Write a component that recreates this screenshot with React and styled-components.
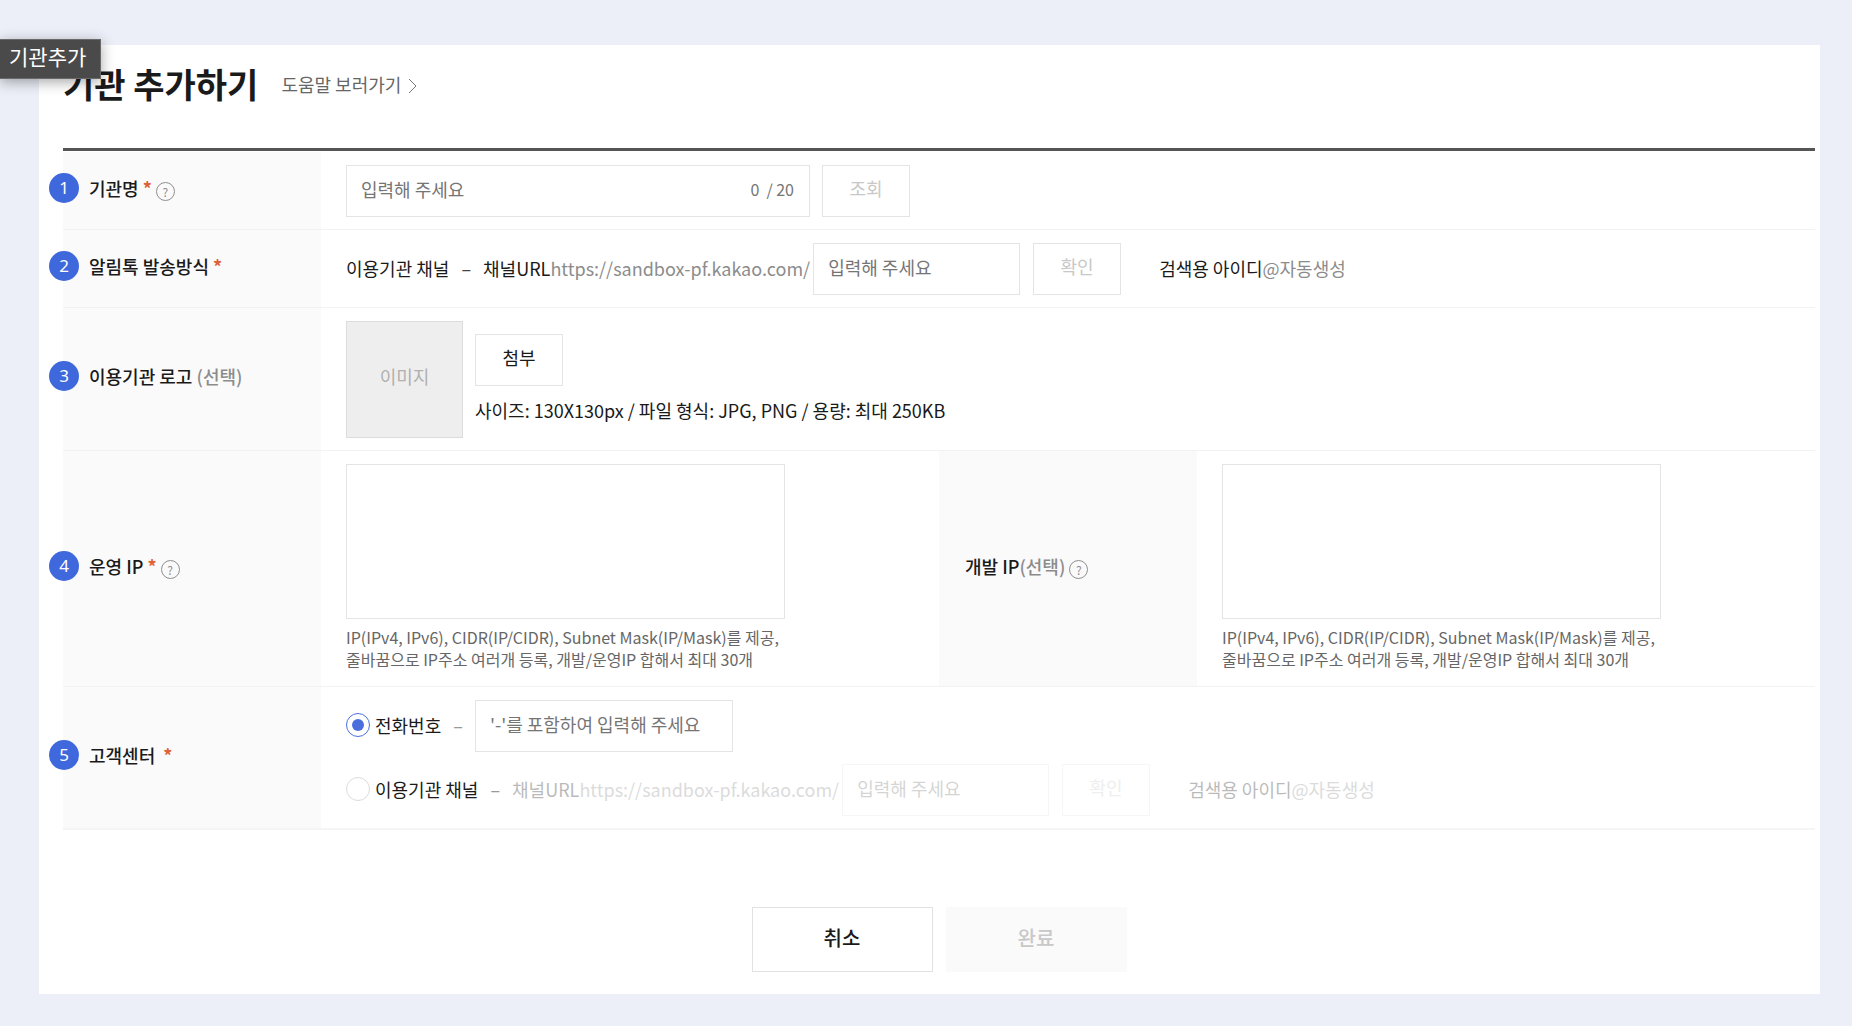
import React, { useState } from 'react';
import styled, { createGlobalStyle, css } from 'styled-components';

const GlobalStyle = createGlobalStyle`
    *,
    *::before,
    *::after {
        box-sizing: border-box;
    }

    body {
        margin: 0;
        background: #eceff8;
    }

    body,
    button,
    input,
    textarea {
        font-family: 'Noto Sans CJK KR', 'Noto Sans', sans-serif;
        font-size: 18px;
        line-height: 26px;
        color: #1a1a1a;
    }
`;

const Page = styled.div`
    position: relative;
    padding: 45px 32px 33px 39px;
`;

const PageTooltip = styled.div`
    position: absolute;
    top: 39px;
    left: 0;
    z-index: 1;
    padding: 3px 14px 9px 9px;
    border: 1px solid #6a6a6a;
    border-left: 0;
    background: #4a4a4a;
    box-shadow: 0 3px 14px rgba(0, 0, 0, 0.35);
    color: #fff;
    font-size: 21px;
`;

const Card = styled.main`
    padding: 16px 5px 22px 24px;
    background: #fff;
`;

const Header = styled.header`
    display: flex;
    align-items: center;
    gap: 23px;
    height: 87px;
    padding-bottom: 42px;
`;

const Title = styled.h1`
    margin: 0;
    font-size: 34px;
    font-weight: 700;
    line-height: 46px;
`;

const HelpLink = styled.a`
    display: flex;
    align-items: center;
    gap: 7px;
    color: #666;
    text-decoration: none;

    svg {
        margin-top: 4px;
    }
`;

const Fields = styled.div`
    padding-top: 1px;
    border-top: 3px solid #555;
`;

const Row = styled.div`
    display: flex;
    border-bottom: 1px solid #f2f2f2;

    &:last-child {
        border-bottom: 2px solid #f5f5f5;
    }
`;

const Field = styled.div`
    display: flex;
    flex: 1;
    min-width: 0;
`;

const FieldLabel = styled.div`
    display: flex;
    flex: none;
    align-items: center;
    width: 258px;
    padding: 0 10px 6px 26px;
    background: #fafafa;
    font-weight: 500;
    white-space: pre;
`;

const FieldBody = styled.div`
    display: flex;
    flex: 1;
    flex-direction: ${({ $column }) => ($column ? 'column' : 'row')};
    align-items: ${({ $column }) => ($column ? 'flex-start' : 'center')};
    gap: 12px;
    min-width: 0;
    padding: 13px 0 12px 25px;
`;

const Badge = styled.span`
    flex: none;
    width: 30px;
    height: 30px;
    margin: 0 10px 0 -40px;
    border-radius: 50%;
    background: #3f68dc;
    color: #fff;
    font-family: 'Noto Sans', sans-serif;
    font-size: 17px;
    font-weight: 400;
    line-height: 30px;
    text-align: center;
`;

const Required = styled.span`
    color: #dd6238;
    font-weight: 700;
`;

const Muted = styled.span`
    color: #8c8c8c;
`;

const HelpButton = styled.button`
    width: 19px;
    height: 19px;
    margin: 7px 0 0 4px;
    padding: 0;
    border: 1px solid #8f8f8f;
    border-radius: 50%;
    background: none;
    color: #8f8f8f;
    font-size: 12px;
    line-height: 15px;
`;

const boxStyle = css`
    height: 52px;
    border: 1px solid #e4e4e4;
    background: #fff;
`;

const TextInput = styled.input`
    ${boxStyle}
    width: ${({ $width }) => $width};
    padding: 0 14px 4px;

    &::placeholder {
        color: #757575;
        opacity: 1;
    }
`;

const CountedInput = styled.div`
    ${boxStyle}
    display: flex;
    align-items: center;
    width: 464px;
    padding-right: 15px;

    input {
        flex: 1;
        min-width: 0;
        height: 50px;
        border: 0;
        background: none;
    }
`;

const Counter = styled.span`
    display: flex;
    gap: 7px;
    padding-bottom: 4px;
    color: #757575;
    font-size: 16px;
`;

const SmallButton = styled.button`
    ${boxStyle}
    flex: none;
    width: 88px;
    padding: 0 0 6px;

    &:disabled {
        color: #c8c8c8;
    }
`;

const Inline = styled.div`
    display: flex;
    align-items: center;
    min-height: 52px;
    white-space: nowrap;
`;

const InlineText = styled.span`
    padding-bottom: 3px;
`;

const Dash = styled(InlineText)`
    padding-right: 12px;
    padding-left: 12px;
    color: ${({ $light }) => ($light ? '#999' : '#444')};
`;

const ChannelGroup = styled.div`
    display: flex;
    align-items: center;
    opacity: ${({ $off }) => ($off ? 0.3 : 1)};

    ${SmallButton} {
        margin: 0 38px 0 13px;
    }
`;

const UrlLabel = styled.label`
    padding: 0 3px 3px 0;
`;

const LogoPreview = styled.div`
    display: flex;
    align-items: center;
    justify-content: center;
    width: 117px;
    height: 117px;
    padding-bottom: 7px;
    border: 1px solid #dcdcdc;
    background: #eee;
    color: #b0b0b0;
`;

const LogoInfo = styled.div`
    display: flex;
    flex-direction: column;
    align-items: flex-start;
    gap: 11px;
    padding-bottom: 3px;
`;

const IpBox = styled.div`
    display: flex;
    flex-direction: column;
    gap: 7px;
    padding-bottom: 4px;
`;

const IpArea = styled.textarea`
    ${boxStyle}
    display: block;
    width: 439px;
    height: 155px;
    padding: 12px 13px;
    resize: none;
`;

const IpHint = styled.p`
    margin: 0;
    color: #666;
    font-size: 16px;
    line-height: 22px;
    white-space: nowrap;
`;

const RadioLabel = styled.label`
    display: flex;
    align-items: center;
    gap: 5px;
    padding-bottom: 3px;
`;

const Radio = styled.input`
    display: grid;
    place-items: center;
    width: 24px;
    height: 24px;
    margin: 0;
    appearance: none;
    border: 1px solid #dcdcdc;
    border-radius: 50%;
    background: #fff;

    &:checked {
        border-color: #4a6fdc;
    }

    &:checked::before {
        content: '';
        width: 12px;
        height: 12px;
        border-radius: 50%;
        background: #4a6fdc;
    }
`;

const Footer = styled.footer`
    display: flex;
    justify-content: center;
    gap: 13px;
    margin-top: 77px;
`;

const FooterButton = styled.button`
    width: 181px;
    height: 65px;
    padding: 0 0 4px;
    border: 1px solid #e2e2e2;
    background: #fff;
    font-size: 20px;
    font-weight: 500;

    &:disabled {
        border-color: #fafafa;
        background: #fafafa;
        color: #c8c8c8;
    }
`;

const Help = () => (
    <HelpButton type="button" aria-label="도움말">
        ?
    </HelpButton>
);

const ChannelForm = ({ disabled, name }) => (
    <ChannelGroup $off={disabled}>
        <UrlLabel htmlFor={name}>
            채널URL<Muted>https://sandbox-pf.kakao.com/</Muted>
        </UrlLabel>
        <TextInput id={name} $width="207px" placeholder="입력해 주세요" disabled={disabled} />
        <SmallButton type="button" disabled>
            확인
        </SmallButton>
        <InlineText>
            검색용 아이디<Muted>@자동생성</Muted>
        </InlineText>
    </ChannelGroup>
);

const IpForm = ({ id }) => (
    <IpBox>
        <IpArea id={id} />
        <IpHint>
            IP(IPv4, IPv6), CIDR(IP/CIDR), Subnet Mask(IP/Mask)를 제공,
            <br />
            줄바꿈으로 IP주소 여러개 등록, 개발/운영IP 합해서 최대 30개
        </IpHint>
    </IpBox>
);

const App = () => {
    const [orgName, setOrgName] = useState('');
    const [contact, setContact] = useState('phone');

    return (
        <Page>
            <GlobalStyle />
            <PageTooltip role="tooltip">기관추가</PageTooltip>
            <Card>
                <Header>
                    <Title>기관 추가하기</Title>
                    <HelpLink href="#help">
                        도움말 보러가기
                        <svg width="9" height="16" viewBox="0 0 9 16" fill="none" stroke="#777">
                            <path d="M1 1 8 8 1 15" />
                        </svg>
                    </HelpLink>
                </Header>

                <Fields>
                    <Row>
                        <FieldLabel>
                            <Badge>1</Badge>
                            <label htmlFor="org-name">
                                기관명 <Required>*</Required>
                            </label>
                            <Help />
                        </FieldLabel>
                        <FieldBody>
                            <CountedInput>
                                <TextInput
                                    id="org-name"
                                    placeholder="입력해 주세요"
                                    maxLength={20}
                                    value={orgName}
                                    onChange={e => setOrgName(e.target.value)}
                                />
                                <Counter>
                                    <span>{orgName.length}</span>
                                    <span>/ 20</span>
                                </Counter>
                            </CountedInput>
                            <SmallButton type="button" disabled={!orgName}>
                                조회
                            </SmallButton>
                        </FieldBody>
                    </Row>

                    <Row>
                        <FieldLabel>
                            <Badge>2</Badge>
                            알림톡 발송방식 <Required>*</Required>
                        </FieldLabel>
                        <FieldBody>
                            <Inline>
                                <InlineText>이용기관 채널</InlineText>
                                <Dash>–</Dash>
                                <ChannelForm name="send-channel" />
                            </Inline>
                        </FieldBody>
                    </Row>

                    <Row>
                        <FieldLabel>
                            <Badge>3</Badge>
                            이용기관 로고 <Muted>(선택)</Muted>
                        </FieldLabel>
                        <FieldBody>
                            <LogoPreview>이미지</LogoPreview>
                            <LogoInfo>
                                <SmallButton type="button">첨부</SmallButton>
                                <span>사이즈: 130X130px / 파일 형식: JPG, PNG / 용량: 최대 250KB</span>
                            </LogoInfo>
                        </FieldBody>
                    </Row>

                    <Row>
                        <Field>
                            <FieldLabel>
                                <Badge>4</Badge>
                                <label htmlFor="prod-ip">
                                    운영 IP <Required>*</Required>
                                </label>
                                <Help />
                            </FieldLabel>
                            <FieldBody>
                                <IpForm id="prod-ip" />
                            </FieldBody>
                        </Field>
                        <Field>
                            <FieldLabel>
                                <label htmlFor="dev-ip">
                                    개발 IP<Muted>(선택)</Muted>
                                </label>
                                <Help />
                            </FieldLabel>
                            <FieldBody>
                                <IpForm id="dev-ip" />
                            </FieldBody>
                        </Field>
                    </Row>

                    <Row>
                        <FieldLabel>
                            <Badge>5</Badge>
                            고객센터{'  '}
                            <Required>*</Required>
                        </FieldLabel>
                        <FieldBody $column>
                            <Inline>
                                <RadioLabel>
                                    <Radio
                                        type="radio"
                                        name="contact"
                                        checked={contact === 'phone'}
                                        onChange={() => setContact('phone')}
                                    />
                                    전화번호
                                </RadioLabel>
                                <Dash $light>–</Dash>
                                <TextInput
                                    $width="258px"
                                    aria-label="전화번호"
                                    placeholder="'-'를 포함하여 입력해 주세요"
                                    disabled={contact !== 'phone'}
                                />
                            </Inline>
                            <Inline>
                                <RadioLabel>
                                    <Radio
                                        type="radio"
                                        name="contact"
                                        checked={contact === 'channel'}
                                        onChange={() => setContact('channel')}
                                    />
                                    이용기관 채널
                                </RadioLabel>
                                <Dash $light>–</Dash>
                                <ChannelForm
                                    name="contact-channel"
                                    disabled={contact !== 'channel'}
                                />
                            </Inline>
                        </FieldBody>
                    </Row>
                </Fields>

                <Footer>
                    <FooterButton type="button">취소</FooterButton>
                    <FooterButton type="submit" disabled>
                        완료
                    </FooterButton>
                </Footer>
            </Card>
        </Page>
    );
};

export default App;
